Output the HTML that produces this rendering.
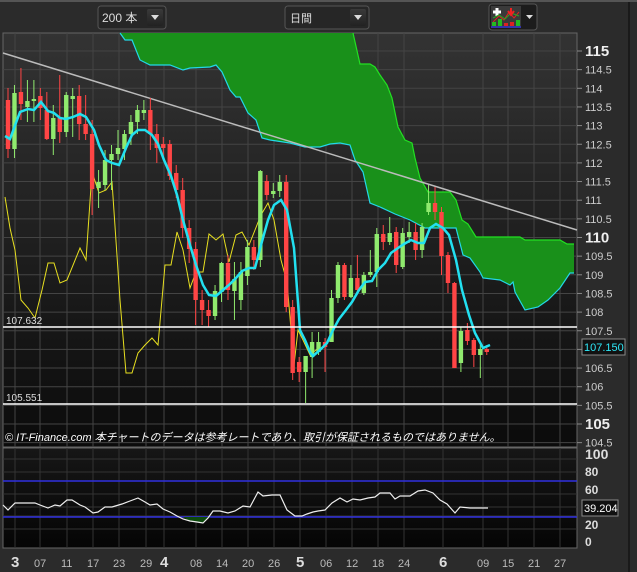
<!DOCTYPE html>
<html><head><meta charset="utf-8"><style>
html,body{margin:0;padding:0;background:#2b2b2b;width:637px;height:572px;overflow:hidden;font-family:"Liberation Sans","Noto Sans CJK JP",sans-serif}
svg{position:absolute;left:0;top:0}
</style></head><body>
<svg id="s" width="637" height="572" xmlns="http://www.w3.org/2000/svg">
<defs>
<linearGradient id="bg" x1="0" y1="0" x2="0" y2="1"><stop offset="0" stop-color="#333"/><stop offset="1" stop-color="#0b0b0b"/></linearGradient>
<linearGradient id="bg2" x1="0" y1="0" x2="0" y2="1"><stop offset="0" stop-color="#161616"/><stop offset="1" stop-color="#050505"/></linearGradient>
<linearGradient id="btn" x1="0" y1="0" x2="0" y2="1"><stop offset="0" stop-color="#3a3a3a"/><stop offset="1" stop-color="#222"/></linearGradient>
</defs>
<rect x="0" y="0" width="637" height="572" fill="#2b2b2b"/>
<rect x="0" y="0" width="637" height="2" fill="#555"/>
<rect x="628" y="2" width="2" height="570" fill="#1a1a1a"/>
<!-- controls -->
<rect x="98" y="6" width="68" height="23" rx="3" fill="#262626" stroke="#555"/>
<text x="102" y="22" fill="#ddd" font-size="12">200 本</text>
<rect x="147" y="9" width="16" height="17" rx="2" fill="url(#btn)"/>
<path d="M151 15h8l-4 5z" fill="#ddd"/>
<rect x="285" y="6" width="84" height="23" rx="3" fill="#262626" stroke="#555"/>
<text x="290" y="22" fill="#ddd" font-size="11">日間</text>
<rect x="350" y="9" width="16" height="17" rx="2" fill="url(#btn)"/>
<path d="M354 15h8l-4 5z" fill="#ddd"/>
<rect x="489" y="4" width="48" height="26" rx="3" fill="#1c1c1c" stroke="#555"/>
<rect x="491" y="6" width="30" height="22" fill="#3a3a3a"/>
<path d="M493 12h8M497 8v8" stroke="#fff" stroke-width="3"/>
<path d="M493 22l6-6 5 4 5-8 5 6 5-6" stroke="#d22" fill="none"/>
<path d="M493 18l6-3 6 4 6-6 8 3" stroke="#2a2" fill="none"/>
<path d="M511 8v6M508 11l3 4 3-4" stroke="#e22" stroke-width="2" fill="none"/>
<rect x="492" y="22" width="4" height="4" fill="#2b2"/><rect x="498" y="19" width="4" height="7" fill="#2b2"/><rect x="504" y="23" width="4" height="3" fill="#d22"/><rect x="510" y="22" width="4" height="4" fill="#d22"/><rect x="516" y="20" width="4" height="6" fill="#2b2"/>
<rect x="491" y="26" width="30" height="2" fill="#33a"/>
<path d="M526 15h7l-3.5 4z" fill="#ddd"/>
<!-- main plot -->
<rect x="3" y="33" width="574" height="414" fill="url(#bg)" stroke="#666"/>
<g id="grid" stroke="#444" stroke-width="1"></g>
<g id="cloud"></g>
<line x1="3" y1="53" x2="577" y2="230" stroke="#bbb" stroke-width="1.5"/>
<polyline id="yel" fill="none" stroke="#e8e020" stroke-width="1"/>
<g id="candles"></g>
<polyline id="ma" fill="none" stroke="#22e0f0" stroke-width="2.5"/>
<line x1="3" y1="327" x2="577" y2="327" stroke="#fff" stroke-width="1.5"/>
<line x1="3" y1="404" x2="577" y2="404" stroke="#fff" stroke-width="1.5"/>
<text x="6" y="324" fill="#ddd" font-size="10">107.632</text>
<text x="6" y="401" fill="#ddd" font-size="10">105.551</text>
<text x="5" y="441" fill="#fff" font-size="11" font-style="italic">© IT-Finance.com 本チャートのデータは参考レートであり、取引が保証されるものではありません。</text>
<g id="axis" font-size="11" fill="#ddd"></g>
<rect x="582" y="339" width="43" height="16" fill="#111" stroke="#888"/>
<text x="584" y="351" fill="#2ee8f8" font-size="11">107.150</text>
<!-- sub -->
<rect x="3" y="448" width="574" height="100" fill="url(#bg2)" stroke="#666"/>
<g id="grid2" stroke="#333"></g>
<line x1="3" y1="481" x2="577" y2="481" stroke="#3030e0" stroke-width="1.5"/>
<line x1="3" y1="517" x2="577" y2="517" stroke="#3030e0" stroke-width="1.5"/>
<path d="M183 517L190 521L197 522L203 523L208 518L211 517Z" fill="#0d4a0d"/>
<polyline id="osc" fill="none" stroke="#eee" stroke-width="1.2"/>
<g font-size="12" font-weight="bold" fill="#ddd">
<text x="585" y="459" font-size="14">100</text><text x="585" y="494">60</text><text x="585" y="476">80</text><text x="585" y="529">20</text><text x="585" y="546">0</text></g>
<rect x="582" y="500" width="36" height="16" fill="#111" stroke="#888"/>
<text x="584" y="512" fill="#fff" font-size="11">39.204</text>
<g id="dates" fill="#ccc" font-size="11"></g>
</svg>
<script>
var NS="http://www.w3.org/2000/svg";
function el(p,t,a,txt){var e=document.createElementNS(NS,t);for(var k in a)e.setAttribute(k,a[k]);if(txt!=null)e.textContent=txt;document.getElementById(p).appendChild(e);return e;}
var dx=[15,40,67,93,119,146,164,196,222,248,274,300,326,352,378,404,443,483,508,534,560];
var dl=["3","07","11","17","23","29","4","08","14","20","26","5","06","12","18","24","6","09","15","21","27"];
for(var y=51;y<447;y+=18.65)el("grid","line",{x1:3,x2:577,y1:y,y2:y});
dx.forEach(function(x,i){el("grid","line",{x1:x,x2:x,y1:33,y2:447});el("grid2","line",{x1:x,x2:x,y1:448,y2:548});
var big=dl[i].length==1;el("dates","text",{x:x-(big?4:6),y:567,"font-size":big?15:11,"font-weight":big?"bold":"normal",fill:big?"#ddd":"#bbb"},dl[i]);});
[459,472,494,507,516,529].forEach(function(y){el("grid2","line",{x1:3,x2:577,y1:y,y2:y});});
// axis
for(var i=0;i<=21;i++){var p=115-i*0.5,y=51+i*18.65;var b=(p==115||p==110||p==105);
el("axis","text",{x:585,y:y+4+(b?1:0),"font-size":b?15:11,"font-weight":b?"bold":"normal",fill:b?"#eee":"#ccc"},p%1?p.toFixed(1):String(p));
el("axis","line",{x1:577,x2:582,y1:y,y2:y,stroke:"#888"});}
// cloud
var lower=[[120,33],[125,40],[132,40],[140,60],[150,65],[170,65],[183,70],[190,68],[210,67],[216,65],[222,72],[230,90],[236,97],[240,97],[248,113],[256,120],[262,138],[270,140],[290,143],[305,147],[320,147],[330,144],[340,143],[350,145],[355,160],[363,172],[370,203],[380,207],[395,214],[410,220],[425,228],[456,228],[463,255],[470,258],[480,272],[483,278],[500,280],[510,285],[513,282],[515,292],[525,310],[538,307],[548,300],[560,288],[570,273],[574,273]];
var upper=[[353,33],[360,64],[370,64],[375,67],[380,75],[387,85],[392,98],[398,127],[405,140],[412,143],[415,158],[420,178],[428,192],[450,192],[456,200],[462,220],[468,224],[476,237],[520,237],[525,240],[560,240],[567,244],[574,244]];
var pts=lower.concat(upper.slice().reverse());
el("cloud","polygon",{points:pts.join(" "),fill:"#19901a"});
el("cloud","polyline",{points:lower.join(" "),fill:"none",stroke:"#22d8e8","stroke-width":1.2});
el("cloud","polyline",{points:upper.join(" "),fill:"none",stroke:"#22e022","stroke-width":1.2});
document.getElementById("yel").setAttribute("points","5,197 10,228 15,250 21,300 28,308 35,318 42,290 48,263 54,263 60,283 67,280 80,248 86,260 92,172 99,193 106,190 112,182 120,300 126,373 132,373 138,353 145,345 152,338 158,345 165,265 171,265 177,232 183,250 190,288 196,272 203,272 209,234 216,240 223,234 229,262 236,235 242,232 249,245 255,230 261,215 268,203 274,220 281,260 287,282 294,365 298,330 303,340 310,355 316,350 320,347");
document.getElementById("ma").setAttribute("points","5,136 10,139 20,112 28,109 34,110 41,102 48,111 54,113 60,118 66,119 73,117 80,114 86,117 94,130 99,145 106,160 112,163 119,165 126,148 132,135 138,130 145,130 152,135 158,144 164,160 171,176 177,195 183,220 190,245 196,265 203,285 209,295 216,296 223,290 229,285 236,278 242,271 249,268 255,268 261,245 268,220 274,205 281,200 287,210 294,248 300,330 305,340 310,352 313,356 320,350 327,343 333,330 339,319 346,310 352,302 359,290 365,282 372,281 378,270 385,263 391,253 398,248 404,244 411,240 418,243 424,243 430,228 436,224 443,228 449,235 456,260 462,290 469,315 475,333 483,348 490,345");
document.getElementById("osc").setAttribute("points","3,505 8,510 15,503 25,503 35,503 40,505 48,508 55,505 60,506 67,500 72,500 80,505 85,507 93,513 98,512 105,507 112,507 122,504 130,501 138,498 145,502 150,505 157,504 163,509 170,512 177,516 183,519 190,521 197,522 203,523 208,518 213,511 220,511 228,513 235,511 243,506 250,507 258,492 263,496 272,495 280,495 287,510 295,516 302,516 307,514 313,512 318,511 325,510 332,503 340,498 347,502 353,499 360,500 368,498 375,497 380,493 390,493 395,499 400,496 410,496 418,491 425,490 433,493 440,500 447,504 455,513 460,507 470,508 478,508 488,508");
var C=[["R",100,149,88,158],["G",93,149,85,158],["R",92,104,68,120],["G",101,107,80,122],["G",99,101,80,122],["R",96,108,88,120],["R",110,139,92,140],["G",118,139,105,155],["R",118,132,75,143],["G",95,132,92,137],["G",96,99,88,137],["R",96,124,85,140],["R",124,134,95,140],["R",134,189,120,215],["G",182,188,170,208],["G",160,185,150,190],["G",154,160,145,190],["G",148,154,130,160],["G",134,149,130,160],["G",122,134,115,145],["G",110,122,105,134],["G",110,113,100,120],["R",110,134,98,150],["R",134,148,124,163],["R",144,148,137,160],["R",144,176,140,180],["R",173,190,165,198],["R",190,228,178,238],["R",228,249,220,263],["R",249,300,242,325],["R",300,310,290,325],["R",310,316,300,327],["G",291,316,285,320],["G",263,292,262,302],["R",263,290,255,300],["G",279,291,262,320],["G",272,300,262,310],["G",247,276,240,285],["R",247,260,240,270],["G",171,260,170,267],["R",181,195,175,200],["G",191,194,183,198],["G",182,191,175,197],["R",182,307,175,312],["R",307,373,300,380],["R",362,372,357,382],["G",356,372,356,403],["G",342,357,332,378],["G",342,352,332,355],["R",342,347,338,372],["G",298,342,290,342],["G",265,298,262,303],["R",265,297,263,300],["G",278,297,265,298],["R",278,290,255,293],["G",275,293,272,295],["G",272,275,250,277],["G",234,272,228,287],["R",234,242,225,250],["G",233,242,217,245],["R",232,265,227,273],["G",233,267,228,269],["G",232,237,222,243],["R",232,250,223,260],["G",227,250,223,258],["G",203,212,185,215],["R",203,212,187,220],["R",212,256,207,275],["R",255,283,252,293],["R",283,368,282,368],["G",331,363,327,372],["R",330,341,323,345],["R",340,355,338,367],["G",349,355,345,378],["R",349,352,345,355]];
C.forEach(function(c,i){var x=8+i*6.47;var col=c[0]=="R"?"#ff4545":"#90ea6e";
el("candles","line",{x1:x,x2:x,y1:c[3],y2:c[4],stroke:col,"stroke-width":1});
el("candles","rect",{x:x-2.2,y:c[1],width:4.4,height:Math.max(2,c[2]-c[1]),fill:col});});
</script>
</body></html>
